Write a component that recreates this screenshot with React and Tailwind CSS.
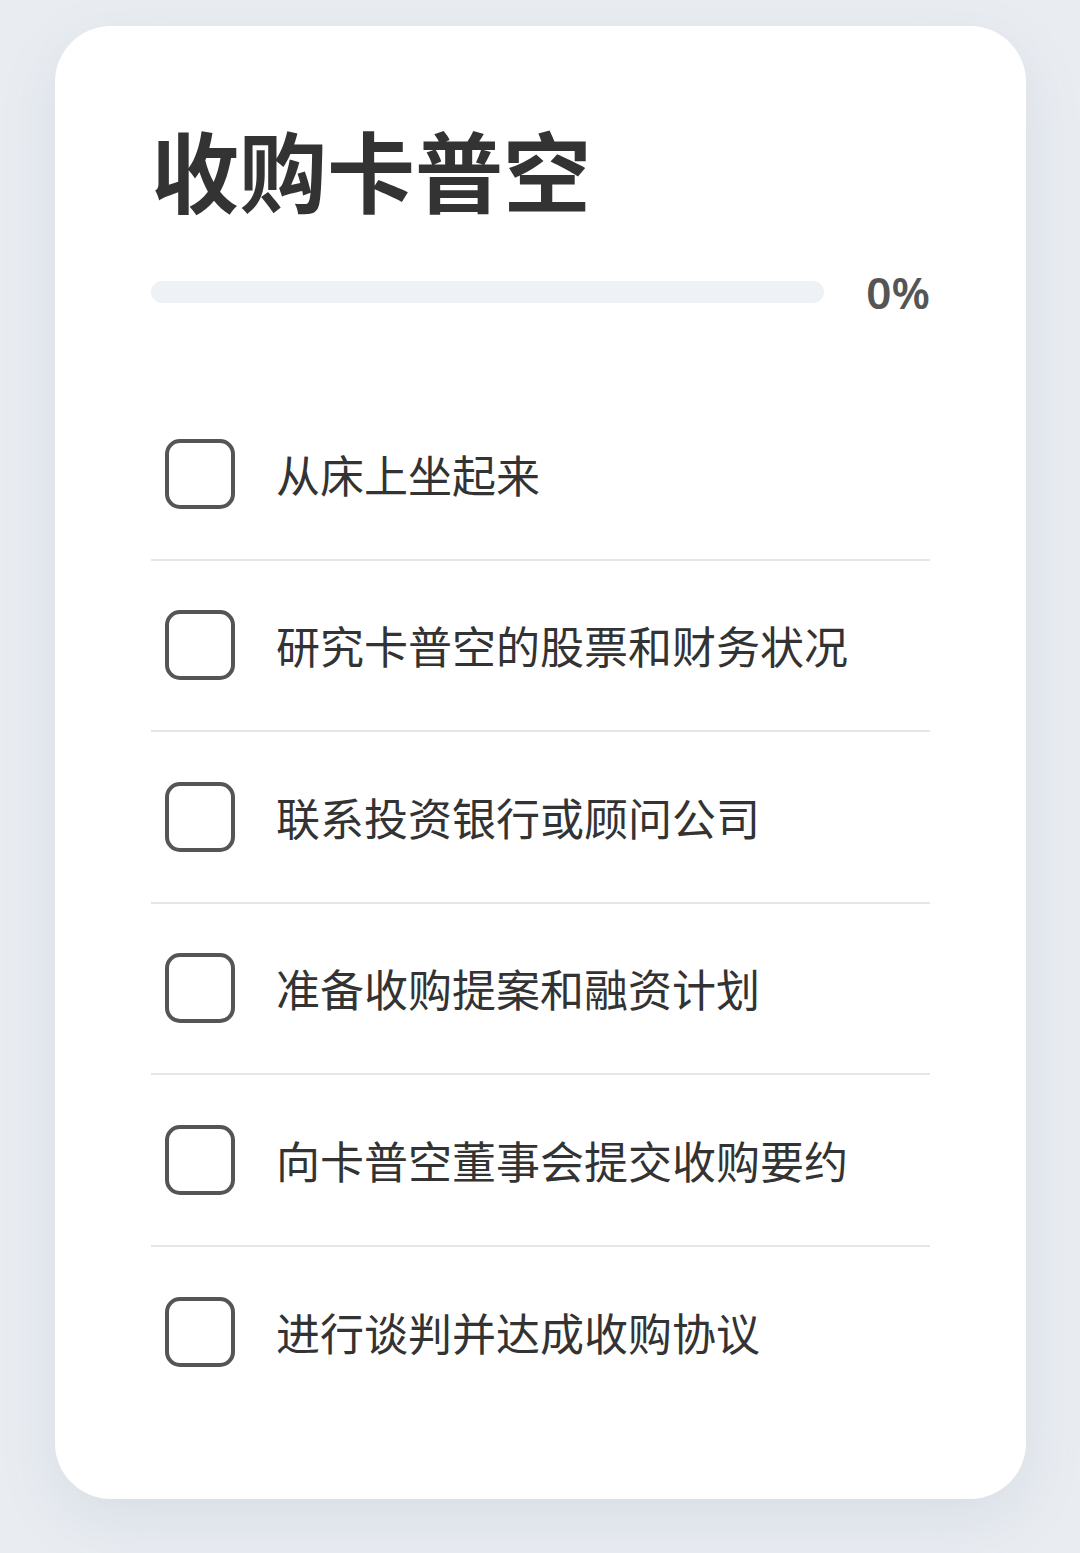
import React from "react";

const items = [
  "从床上坐起来",
  "研究卡普空的股票和财务状况",
  "联系投资银行或顾问公司",
  "准备收购提案和融资计划",
  "向卡普空董事会提交收购要约",
  "进行谈判并达成收购协议",
];

export default function App() {
  return (
    <div
      className="min-h-screen w-full bg-[#e9edf2] pt-[26px] pl-[55px]"
      style={{ fontFamily: '"Noto Sans", "Noto Sans CJK SC", sans-serif' }}
    >
      <div className="w-[971px] h-[1473px] rounded-[56px] bg-white px-[96px] pt-[98px] shadow-[0_20px_60px_rgba(100,116,139,0.12)]">
        <h1
          className="text-[88px] leading-none font-bold text-[#333333] m-0"
          style={{ fontFamily: '"Noto Sans CJK SC", sans-serif' }}
        >
          收购卡普空
        </h1>
        <div className="mt-[58px] h-[44px] flex items-center gap-[42px]">
          <div className="flex-1 h-[22px] rounded-full bg-[#eef2f6]" />
          <span
            className="text-[44px] font-semibold text-[#555555] leading-none"
            style={{ fontFamily: '"Noto Sans", sans-serif' }}
          >
            0%
          </span>
        </div>
        <ul className="mt-[75px]">
          {items.map((t, i) => (
            <li
              key={i}
              className={`h-[171.5px] flex items-center pl-[14px] ${
                i < items.length - 1 ? "border-b-2 border-[#e6e6e6]" : ""
              }`}
            >
              <span className="w-[70px] h-[70px] rounded-[15px] border-[4px] border-[#555555] shrink-0" />
              <span
                className="ml-[41px] text-[44px] text-[#333333] leading-none"
                style={{ fontFamily: '"Noto Sans CJK SC", sans-serif' }}
              >
                {t}
              </span>
            </li>
          ))}
        </ul>
      </div>
    </div>
  );
}
